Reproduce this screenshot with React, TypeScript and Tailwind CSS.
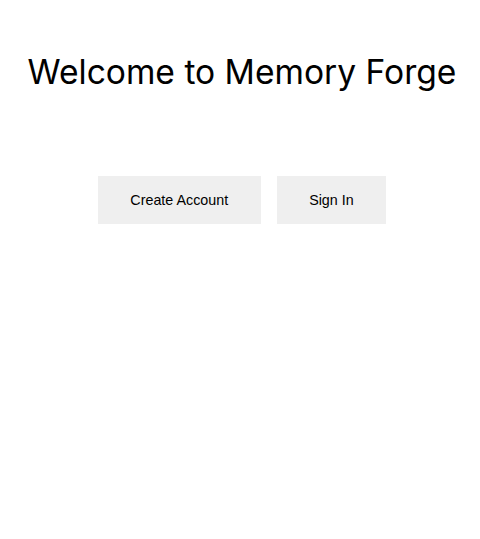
export default function App() {
  return (
    <div className="w-[480px] h-[539px] bg-white pl-1 flex flex-col items-center">
      <h1 className="mt-[48px] font-['Inter',_'Noto_Sans',_sans-serif] text-[33.6px] leading-[48px] text-black">
        Welcome to Memory Forge
      </h1>
      <div className="mt-[80px] flex gap-4 font-['Liberation_Sans',_Arial,_sans-serif]">
        <button className="h-12 px-[32.5px] pt-0.5 bg-[#efefef] text-[14.3px] text-black">
          Create Account
        </button>
        <button className="h-12 px-[32.5px] pt-0.5 bg-[#efefef] text-[14.3px] text-black">
          Sign In
        </button>
      </div>
    </div>
  );
}
